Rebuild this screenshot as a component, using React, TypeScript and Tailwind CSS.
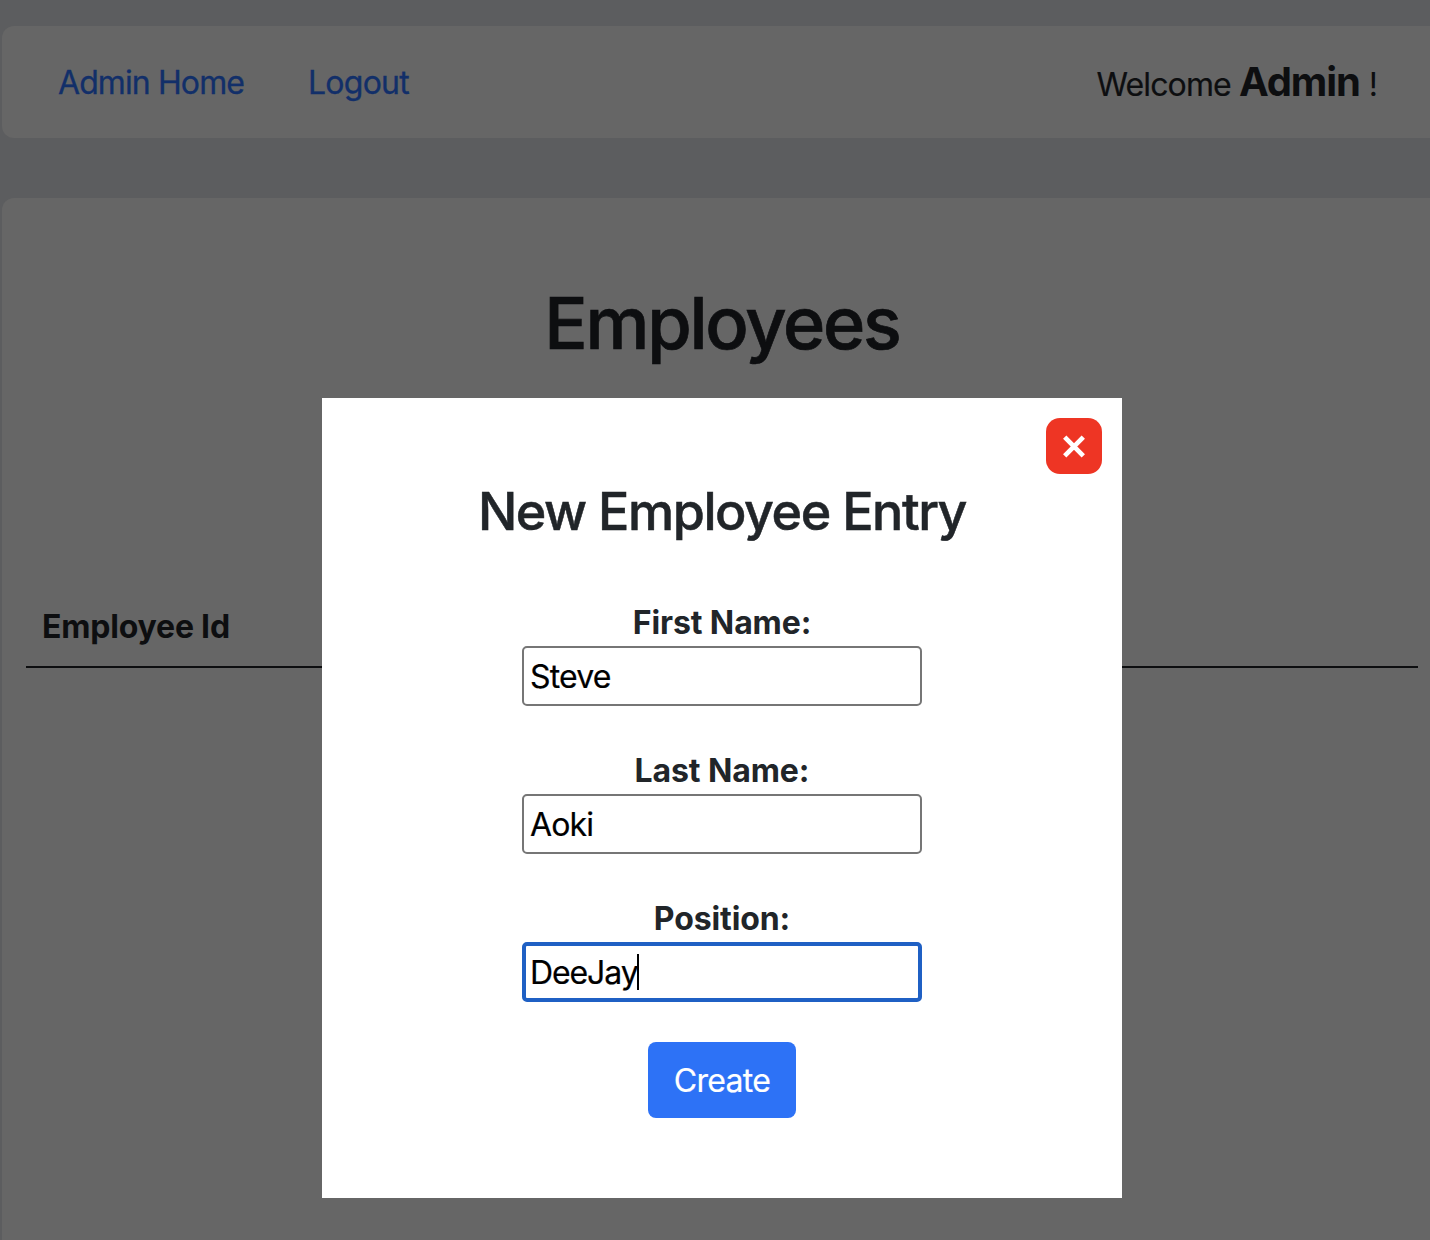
import React from "react";

const fields = [
  { label: "First Name:", value: "Steve", active: false },
  { label: "Last Name:", value: "Aoki", active: false },
  { label: "Position:", value: "DeeJay", active: true },
];

export default function App() {
  return (
    <div className="relative h-[1240px] w-[1430px] overflow-hidden bg-[#5c5d5f] pl-[2px] pt-[26px] font-['Inter',sans-serif] text-[32px] leading-[48px] text-[#0d0e10]">
      <nav className="flex h-[112px] items-center rounded-l-[12px] bg-[#666666] pl-[56px] pr-[52px] pt-[2px]">
        <a className="w-[186px] whitespace-nowrap tracking-[-0.9px] text-[#122f69] [-webkit-text-stroke:0.3px_#122f69]">Admin Home</a>
        <a className="ml-[64px] tracking-[-0.75px] text-[#122f69] [-webkit-text-stroke:0.3px_#122f69]">Logout</a>
        <p className="ml-auto whitespace-nowrap"><span className="tracking-[-0.9px] [-webkit-text-stroke:0.2px]">Welcome </span><b className="text-[40px] font-bold tracking-[-1.1px]">Admin</b><span> !</span></p>
      </nav>
      <main className="mt-[60px] h-[1060px] rounded-l-[12px] bg-[#666666] pl-[24px] pr-[12px] pt-[82px]">
        <h1 className="text-center text-[72px] font-medium leading-[86px] tracking-[-2.25px] [-webkit-text-stroke:0.7px]">Employees</h1>
        <div className="mt-[220px] h-[82px] border-b-2 border-[#0d0e10] pl-[16px] pt-[17px] font-bold tracking-[-0.2px]">Employee Id</div>
      </main>
      <section className="absolute left-[322px] top-[398px] flex h-[800px] w-[800px] flex-col items-center bg-white text-[#212529]">
        <button className="mr-[20px] mt-[20px] flex size-[56px] shrink-0 items-center justify-center self-end rounded-[14px] bg-[#ee3524]">
          <svg width="24" height="24" viewBox="0 0 24 24" stroke="white" strokeWidth="4.7"><path d="M2.7 3.2 21.3 21.8M21.3 3.2 2.7 21.8" /></svg>
        </button>
        <h2 className="mt-[6px] text-[52px] font-medium leading-[64px] tracking-[-1.45px] [-webkit-text-stroke:0.5px]">New Employee Entry</h2>
        <form className="mt-[55px] flex flex-col items-center">
          {fields.map((f) => (
            <div key={f.label} className="flex h-[148px] flex-col items-center">
              <label className="font-bold tracking-[-0.1px]">{f.label}</label>
              <div className={f.active ? "-mt-px flex h-[60px] w-[400px] items-center rounded-[5px] border-4 border-[#1f60c4] pl-[4px] text-black" : "-mt-px flex h-[60px] w-[400px] items-center rounded-[5px] border-2 border-[#767676] pl-[6px] text-black"}>
                <span className={f.active ? "pt-[2px] tracking-[-1.1px] [-webkit-text-stroke:0.2px]" : "pt-[2px] tracking-[-0.85px] [-webkit-text-stroke:0.2px]"}>{f.value}</span>
                {f.active && <i className="-ml-px h-[36px] w-[2px] bg-black" />}
              </div>
            </div>
          ))}
        </form>
        <button className="-mt-px flex h-[76px] w-[148px] items-center justify-center rounded-[8px] bg-[#2d72f6] pt-[2px] tracking-[-0.7px] text-white [-webkit-text-stroke:0.2px]">Create</button>
      </section>
    </div>
  );
}
